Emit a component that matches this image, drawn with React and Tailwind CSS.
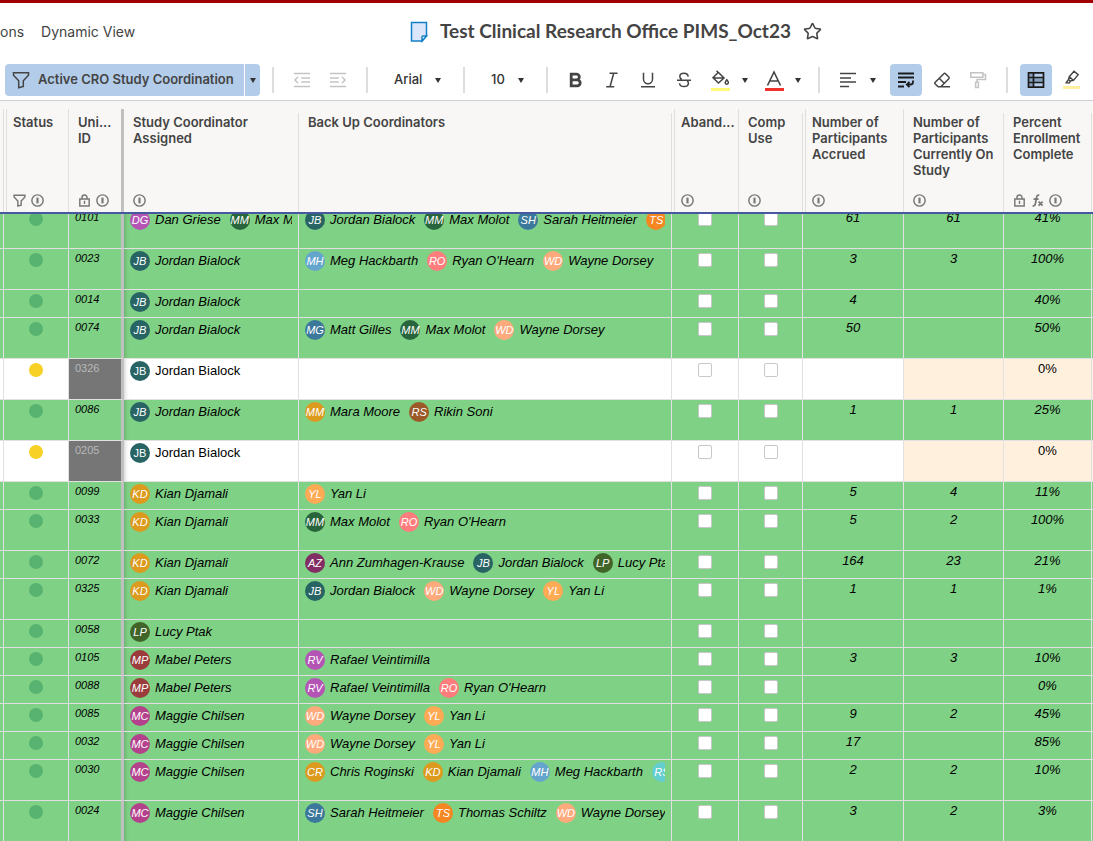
import React, { useLayoutEffect, useRef, useState } from 'react';
import { Star } from 'lucide-react';

// Contact name -> initials + avatar color
const PEOPLE = {
  'Dan Griese': ['DG', 'bg-[#b455b6]'],
  'Max Molot': ['MM', 'bg-[#28643c]'],
  'Jordan Bialock': ['JB', 'bg-[#286464]'],
  'Sarah Heitmeier': ['SH', 'bg-[#3c789b]'],
  'Thomas Schiltz': ['TS', 'bg-[#f58723]'],
  'Meg Hackbarth': ['MH', 'bg-[#64a5cd]'],
  "Ryan O'Hearn": ['RO', 'bg-[#ff7d7d]'],
  'Wayne Dorsey': ['WD', 'bg-[#ffaa7d]'],
  'Matt Gilles': ['MG', 'bg-[#3c789b]'],
  'Mara Moore': ['MM', 'bg-[#dc9b1e]'],
  'Rikin Soni': ['RS', 'bg-[#9b5a28]'],
  'Kian Djamali': ['KD', 'bg-[#dc9b1e]'],
  'Yan Li': ['YL', 'bg-[#ffaa55]'],
  'Ann Zumhagen-Krause': ['AZ', 'bg-[#822d64]'],
  'Lucy Ptak': ['LP', 'bg-[#416428]'],
  'Mabel Peters': ['MP', 'bg-[#9b3c3c]'],
  'Rafael Veintimilla': ['RV', 'bg-[#b455b6]'],
  'Maggie Chilsen': ['MC', 'bg-[#b4418c]'],
  'Chris Roginski': ['CR', 'bg-[#dc9b1e]'],
  'Rikin Shah': ['RS', 'bg-[#64cdcd]'],
};

const ROWS = [
  { id: '0101', tall: true, lead: ['Dan Griese', 'Max Molot'], backup: ['Jordan Bialock', 'Max Molot', 'Sarah Heitmeier', 'Thomas Schiltz'], accrued: '61', current: '61', pct: '41%' },
  { id: '0023', tall: true, lead: ['Jordan Bialock'], backup: ['Meg Hackbarth', "Ryan O'Hearn", 'Wayne Dorsey'], accrued: '3', current: '3', pct: '100%' },
  { id: '0014', lead: ['Jordan Bialock'], backup: [], accrued: '4', current: '', pct: '40%' },
  { id: '0074', tall: true, lead: ['Jordan Bialock'], backup: ['Matt Gilles', 'Max Molot', 'Wayne Dorsey'], accrued: '50', current: '', pct: '50%' },
  { id: '0326', tall: true, pending: true, lead: ['Jordan Bialock'], backup: [], accrued: '', current: '', pct: '0%' },
  { id: '0086', tall: true, lead: ['Jordan Bialock'], backup: ['Mara Moore', 'Rikin Soni'], accrued: '1', current: '1', pct: '25%' },
  { id: '0205', tall: true, pending: true, lead: ['Jordan Bialock'], backup: [], accrued: '', current: '', pct: '0%' },
  { id: '0099', lead: ['Kian Djamali'], backup: ['Yan Li'], accrued: '5', current: '4', pct: '11%' },
  { id: '0033', tall: true, lead: ['Kian Djamali'], backup: ['Max Molot', "Ryan O'Hearn"], accrued: '5', current: '2', pct: '100%' },
  { id: '0072', lead: ['Kian Djamali'], backup: ['Ann Zumhagen-Krause', 'Jordan Bialock', 'Lucy Ptak'], accrued: '164', current: '23', pct: '21%' },
  { id: '0325', tall: true, lead: ['Kian Djamali'], backup: ['Jordan Bialock', 'Wayne Dorsey', 'Yan Li'], accrued: '1', current: '1', pct: '1%' },
  { id: '0058', lead: ['Lucy Ptak'], backup: [], accrued: '', current: '', pct: '' },
  { id: '0105', lead: ['Mabel Peters'], backup: ['Rafael Veintimilla'], accrued: '3', current: '3', pct: '10%' },
  { id: '0088', lead: ['Mabel Peters'], backup: ['Rafael Veintimilla', "Ryan O'Hearn"], accrued: '', current: '', pct: '0%' },
  { id: '0085', lead: ['Maggie Chilsen'], backup: ['Wayne Dorsey', 'Yan Li'], accrued: '9', current: '2', pct: '45%' },
  { id: '0032', lead: ['Maggie Chilsen'], backup: ['Wayne Dorsey', 'Yan Li'], accrued: '17', current: '', pct: '85%' },
  { id: '0030', tall: true, lead: ['Maggie Chilsen'], backup: ['Chris Roginski', 'Kian Djamali', 'Meg Hackbarth', 'Rikin Shah'], accrued: '2', current: '2', pct: '10%' },
  { id: '0024', tall: true, lead: ['Maggie Chilsen'], backup: ['Sarah Heitmeier', 'Thomas Schiltz', 'Wayne Dorsey'], accrued: '3', current: '2', pct: '3%' },
];

// "split" columns follow a hidden column and get a second line on the left
const COLUMNS = [
  { label: 'Status', icons: ['filter', 'info'], split: true },
  { label: 'Uni...\nID', icons: ['lock', 'info'], frozen: true },
  { label: 'Study Coordinator\nAssigned', icons: ['info'] },
  { label: 'Back Up Coordinators', icons: [] },
  { label: 'Aband...', icons: ['info'], split: true },
  { label: 'Comp\nUse', icons: ['info'] },
  { label: 'Number of\nParticipants\nAccrued', icons: ['info'], split: true },
  { label: 'Number of\nParticipants\nCurrently On\nStudy', icons: ['info'] },
  { label: 'Percent\nEnrollment\nComplete', icons: ['lock', 'fx', 'info'] },
];

/* ---------- icons ---------- */

function Svg({ size = 18, width = 1.5, className = '', children }) {
  return (
    <svg width={size} height={size} viewBox="0 0 18 18" fill="none" stroke="currentColor" strokeWidth={width} className={className} aria-hidden="true">
      {children}
    </svg>
  );
}

function Caret() {
  return (
    <svg width="6" height="5" viewBox="0 0 6 5" className="fill-[#333]" aria-hidden="true">
      <path d="M0 0h6L3 5z" />
    </svg>
  );
}

function FilterIcon({ size = 18, width = 1.5 }) {
  return (
    <Svg size={size} width={width}>
      <path d="M1.5 1.8h15v2.4l-5.2 5.6v5.7l-4.6 1.2V9.8L1.5 4.2z" />
    </Svg>
  );
}

function HeaderIcon({ name }) {
  if (name === 'filter') {
    return <FilterIcon size={13} width={2} />;
  }
  if (name === 'lock') {
    return (
      <Svg size={13} width={2}>
        <path d="M2.5 7h13v9.500h-13zM5.500 7V5a3.500 3.500 0 0 1 7 0v2M9 9.500v4.500" />
      </Svg>
    );
  }
  if (name === 'fx') {
    return (
      <Svg size={13} width={2.4}>
        <path d="M11.500 1.800c-2.200-.8-3.300.3-3.700 2.500L5.900 14c-.4 2-1.500 2.900-3.700 2.200M3.500 7h7M10.500 10.500l5.500 5.500M16 10.500L10.500 16" />
      </Svg>
    );
  }
  return (
    <Svg size={13} width={2}>
      <circle cx="9" cy="9" r="7.800" />
      <path d="M9 5v8" strokeWidth="3" />
    </Svg>
  );
}

/* ---------- toolbar ---------- */

function ToolButton({ label, active, muted, children }) {
  return (
    <button
      type="button"
      aria-label={label}
      className={`flex h-8 w-8 shrink-0 items-center justify-center rounded ${active ? 'bg-[#b3ccea] text-[#1c1c1c]' : muted ? 'text-[#c4c4c4]' : 'text-[#444]'}`}
    >
      {children}
    </button>
  );
}

function CaretButton({ label, className = 'w-4' }) {
  return (
    <button type="button" aria-label={label} className={`flex h-8 shrink-0 items-center justify-center ${className}`}>
      <Caret />
    </button>
  );
}

function Divider() {
  return <div className="mx-2 h-[26px] w-[2px] shrink-0 bg-[#dedede]" />;
}

function ToolSelect({ label, value, options, className }) {
  const [current, setCurrent] = useState(value);
  return (
    <div className={`relative shrink-0 ${className}`}>
      <select
        aria-label={label}
        value={current}
        onChange={(e) => setCurrent(e.target.value)}
        className="h-8 w-full appearance-none bg-transparent pl-[14px] text-[13px] font-medium text-[#333] outline-none"
      >
        {options.map((o) => (
          <option key={o}>{o}</option>
        ))}
      </select>
      <span className="pointer-events-none absolute inset-y-0 right-[10px] flex items-center">
        <Caret />
      </span>
    </div>
  );
}

function Toolbar() {
  return (
    <div className="flex h-[41px] shrink-0 items-center gap-1 overflow-hidden border-b border-[#d0d0d0] pl-[5px]">
      <div className="flex shrink-0 gap-px">
        <button type="button" className="flex h-8 w-[239px] items-center gap-2 rounded-l bg-[#b3ccea] pl-[7px] text-[13px] font-semibold whitespace-nowrap text-[#444]">
          <FilterIcon />
          Active CRO Study Coordination
        </button>
        <button type="button" aria-label="Choose filter" className="flex h-8 w-[15px] items-center justify-center rounded-r bg-[#b3ccea]">
          <Caret />
        </button>
      </div>
      <Divider />
      <ToolButton label="Outdent" muted>
        <Svg>
          <path d="M1 2.500h16M1 15.500h16M8 7h9M8 11h9M5 5.800L2 9l3 3.200" />
        </Svg>
      </ToolButton>
      <ToolButton label="Indent" muted>
        <Svg>
          <path d="M1 2.500h16M1 15.500h16M1 7h9M1 11h9M13 5.800L16 9l-3 3.200" />
        </Svg>
      </ToolButton>
      <Divider />
      <ToolSelect label="Font" value="Arial" options={['Arial', 'Tahoma', 'Times New Roman', 'Verdana']} className="w-[71px]" />
      <Divider />
      <ToolSelect label="Font size" value="10" options={['8', '9', '10', '12', '14']} className="w-[57px]" />
      <Divider />
      <ToolButton label="Bold">
        <Svg width={2.8}>
          <path d="M4.200 3.200h5.300a2.800 2.800 0 0 1 0 5.600H4.200zM4.200 8.800h6a3 3 0 0 1 0 6h-6z" />
        </Svg>
      </ToolButton>
      <ToolButton label="Italic">
        <Svg>
          <path d="M6.500 2.200h8M3.200 15.800h8M10.700 2.200L7 15.800" />
        </Svg>
      </ToolButton>
      <ToolButton label="Underline">
        <Svg>
          <path d="M4.500 1.800v6.400a4.500 4.500 0 0 0 9 0V1.800M2 15.800h14" />
        </Svg>
      </ToolButton>
      <ToolButton label="Strikethrough">
        <Svg>
          <path d="M13.200 5.600c-.2-2-1.700-3.300-4.200-3.300-2.400 0-4.200 1.200-4.200 3.200 0 1.300.7 2.200 2 2.800M2 9.200h14M4.500 12.200c.2 2 1.900 3.400 4.500 3.400 2.500 0 4.400-1.200 4.400-3.300 0-1-.4-1.800-1.200-2.400" />
        </Svg>
      </ToolButton>
      <div className="flex shrink-0">
        <ToolButton label="Background color">
          <svg width="20" height="22" viewBox="0 0 20 22" fill="none" stroke="currentColor" strokeWidth="1.500" aria-hidden="true">
            <path d="M8.500 3.500L14 9l-5.500 5L3 8.700l5-5M3.500 9H14M6.500 1.800l2 2" />
            <path d="M16.800 10.800c-1.200 1.500-1.600 2.200-1.600 2.800a1.600 1.600 0 0 0 3.200 0c0-.6-.4-1.300-1.600-2.800z" />
            <path d="M1 20.500h19" stroke="#fffa78" strokeWidth="3" />
          </svg>
        </ToolButton>
        <CaretButton label="Choose background color" className="w-[18px]" />
      </div>
      <div className="flex shrink-0">
        <ToolButton label="Text color">
          <svg width="20" height="22" viewBox="0 0 20 22" fill="none" stroke="currentColor" strokeWidth="1.600" aria-hidden="true">
            <path d="M3.500 16.500L10 3l6.500 13.500M5.800 12h8.400" />
            <path d="M1 20.500h19" stroke="#f0302c" strokeWidth="3" />
          </svg>
        </ToolButton>
        <CaretButton label="Choose text color" />
      </div>
      <Divider />
      <div className="mr-1 flex shrink-0">
        <ToolButton label="Align">
          <Svg>
            <path d="M1 2.500h16M1 7h11M1 11h16M1 15.500h9" />
          </Svg>
        </ToolButton>
        <CaretButton label="Choose alignment" className="w-[18px]" />
      </div>
      <ToolButton label="Wrap text" active>
        <Svg width={1.8}>
          <path d="M1 2.500h16M1 6.500h16M1 11h8M1 15.500h6M16 9.500v1.500a2.500 2.500 0 0 1-2.500 2.500H10M12.500 10.800L9.800 13.500l2.700 2.700" />
        </Svg>
      </ToolButton>
      <ToolButton label="Clear formatting">
        <Svg>
          <path d="M2 11.500l8.800-8.800a1.200 1.200 0 0 1 1.700 0l3.300 3.300a1.200 1.200 0 0 1 0 1.700L7.800 15.700H5.200L2 12.800a1 1 0 0 1 0-1.300zM6.200 7.300l5 5M7.500 15.700H17" />
        </Svg>
      </ToolButton>
      <ToolButton label="Format painter" muted>
        <Svg>
          <path d="M1.800 1.800h12v4.400h-12zM13.800 3.500h2.700v5H8v2.700M6.600 11.300h2.800v5.200H6.600z" />
        </Svg>
      </ToolButton>
      <Divider />
      <ToolButton label="Grid view" active>
        <Svg width={1.7}>
          <path d="M2 2.500h14.500v13H2z" fill="#86a0bd" stroke="none" />
          <path d="M7 2.500h9.500v4H7zM7 11h9.500v4.500H7z" fill="#b3ccea" stroke="none" />
          <path d="M1.500 1.800h15v14.400h-15zM6.500 1.800v14.400M1.500 6.500h15M1.500 11.500h15" />
        </Svg>
      </ToolButton>
      <ToolButton label="Highlight changes">
        <svg width="20" height="22" viewBox="0 0 20 22" fill="none" stroke="currentColor" strokeWidth="1.400" aria-hidden="true">
          <path d="M7.200 7.800l4.800-5.600 4.200 3.500-4.700 5.700-3.200.6-1.800-1.500zM7.200 7.800l4.300 3.600M6.500 10.500l-2.300 3.200 3 .2 1.300-1.900" />
          <path d="M1 18.500h17" stroke="#fff0a0" strokeWidth="3" />
        </svg>
      </ToolButton>
    </div>
  );
}

function TitleBar() {
  return (
    <header className="flex h-[60px] shrink-0 items-center border-t-[3px] border-[#a00000]">
      <nav className="flex w-[410px] shrink-0 gap-[17px] text-[14px] text-[#444]">
        <a href="#solutions">ons</a>
        <a href="#dynamic-view">Dynamic View</a>
      </nav>
      <div className="flex items-center whitespace-nowrap">
        <svg width="18" height="22" viewBox="0 0 18 22" fill="#dbe6fb" stroke="#1480c8" strokeWidth="1.500" aria-hidden="true">
          <path d="M1.500 1.500h15v13.500l-4.500 5H1.500z" />
          <path d="M16.500 15h-3.500q-1 0-1 1v4z" fill="#fff" />
        </svg>
        <h1 className="ml-3 font-[Lato,sans-serif] text-[19px] font-bold text-[#444]">Test Clinical Research Office PIMS_Oct23</h1>
        <button type="button" aria-label="Add to favorites" className="ml-3 text-[#444]">
          <Star size={19} strokeWidth={2} />
        </button>
      </div>
    </header>
  );
}

/* ---------- grid ---------- */

function HeaderCell({ col }) {
  let frame = 'mt-3 h-[99px] border-r border-[#e0dfde] pt-px pl-[9px]';
  if (col.split) frame = 'mt-2 ml-[2px] h-[103px] border-x border-[#e0dfde] pt-[5px] pl-[6px]';
  if (col.frozen) frame = 'mt-2 h-[103px] border-r-[3px] border-[#c0c0c0] pt-[5px] pl-[9px]';
  return (
    <th scope="col" className="border-b-2 border-[#4658a0] bg-[#f8f7f6] p-0 text-left align-top font-normal">
      <div className={`flex flex-col justify-between pb-[5px] ${frame}`}>
        <span className="text-[13px] leading-[16px] font-semibold whitespace-pre text-[#444]">{col.label}</span>
        <span className="flex gap-[5px] text-[#777]">
          {col.icons.map((name) => (
            <HeaderIcon key={name} name={name} />
          ))}
        </span>
      </div>
    </th>
  );
}

function Contacts({ names }) {
  return (
    <div className="flex h-5 gap-[9px] overflow-hidden">
      {names.map((name) => (
        <span key={name} className="flex shrink-0 items-center gap-[5px] whitespace-nowrap">
          <span className={`flex h-5 w-5 items-center justify-center rounded-full text-[11px] leading-5 text-white ${PEOPLE[name][1]}`}>
            {PEOPLE[name][0]}
          </span>
          {name}
        </span>
      ))}
    </div>
  );
}

function Row({ row }) {
  const [flags, setFlags] = useState({ abandoned: false, comp: false });
  const cell = 'border-r border-b border-[#e2e0e2] p-0 align-top';
  const fill = row.pending ? 'bg-white' : 'bg-[#7fd185]';
  const derived = row.pending ? 'bg-[#fff0de]' : 'bg-[#7fd185]';

  return (
    <tr className={`${row.tall ? 'h-[41px]' : 'h-7'} ${fill} ${row.pending ? '' : 'italic'}`}>
      <td className={cell}></td>
      <td className={cell}>
        <span className={`mx-auto mt-1 block h-[14px] w-[14px] rounded-full ${row.pending ? 'bg-[#f7d125]' : 'bg-[#58b370]'}`} />
      </td>
      <td
        className={`border-r-[3px] border-b border-r-[#c0c0c0] border-b-[#e2e0e2] p-0 pl-[6px] align-top text-[11px] leading-[18px] ${row.pending ? 'bg-[#767676] text-[#b8b8b8]' : ''}`}
      >
        {row.id}
      </td>
      <td className={`${cell} px-[6px] pt-[2px] shadow-[inset_5px_0_4px_-4px_rgba(0,0,0,0.2)]`}>
        <Contacts names={row.lead} />
      </td>
      <td className={`${cell} px-[6px] pt-[2px]`}>
        <Contacts names={row.backup} />
      </td>
      {['abandoned', 'comp'].map((key) => (
        <td key={key} className={cell}>
          <input
            type="checkbox"
            aria-label={`${row.id} ${key}`}
            checked={flags[key]}
            onChange={(e) => setFlags({ ...flags, [key]: e.target.checked })}
            className="mx-auto mt-1 block h-[14px] w-[14px] appearance-none rounded-[2px] border border-[#c8c8c8] bg-white checked:bg-[#4658a0]"
          />
        </td>
      ))}
      <td className={`${cell} text-center leading-5`}>{row.accrued}</td>
      <td className={`${cell} ${derived} text-center leading-5`}>{row.current}</td>
      <td className={`${cell} ${derived} text-center leading-5`}>{row.pct}</td>
      <td className={`border-b border-[#e2e0e2] p-0 ${derived}`}></td>
    </tr>
  );
}

function Grid() {
  const scroller = useRef(null);

  // The sheet opens slightly scrolled under its header
  useLayoutEffect(() => {
    scroller.current.scrollTop = 6;
  }, []);

  return (
    <div ref={scroller} className="min-h-0 flex-1 overflow-auto [scrollbar-width:none]">
      <table className="w-full table-fixed border-separate border-spacing-0 font-['Liberation_Sans',Arial,sans-serif] text-[13px] text-black">
        <colgroup>
          <col className="w-1" />
          <col className="w-[65px]" />
          <col className="w-[55px]" />
          <col className="w-[175px]" />
          <col />
          <col className="w-[67px]" />
          <col className="w-16" />
          <col className="w-[101px]" />
          <col className="w-[100px]" />
          <col className="w-[88px]" />
          <col className="w-px" />
        </colgroup>
        <thead className="sticky top-0 z-10 font-[Inter,sans-serif]">
          <tr>
            <td className="border-b-2 border-[#4658a0] bg-[#f8f7f6] p-0 align-top">
              <div className="mt-2 h-[103px] border-r border-[#e0dfde]" />
            </td>
            {COLUMNS.map((col) => (
              <HeaderCell key={col.label} col={col} />
            ))}
            <td className="border-b-2 border-[#4658a0] bg-[#f8f7f6] p-0"></td>
          </tr>
        </thead>
        <tbody>
          {ROWS.map((row) => (
            <Row key={row.id} row={row} />
          ))}
        </tbody>
      </table>
    </div>
  );
}

export default function App() {
  return (
    <div className="flex h-screen flex-col overflow-hidden bg-white font-[Inter,sans-serif]">
      <TitleBar />
      <Toolbar />
      <Grid />
    </div>
  );
}
